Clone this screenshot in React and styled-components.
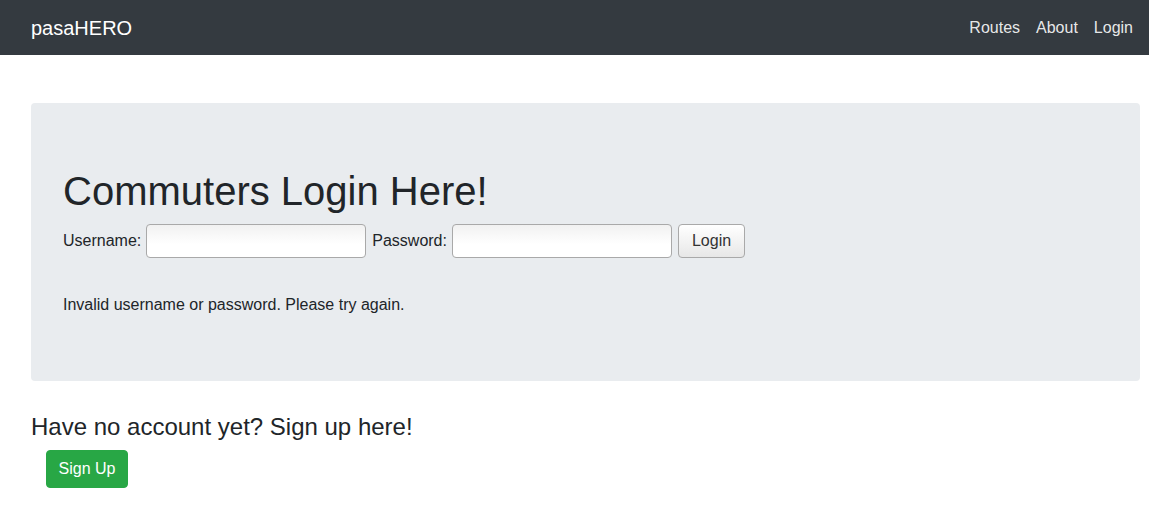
import React, { useState } from "react";
import styled, { createGlobalStyle } from "styled-components";

const GlobalStyle = createGlobalStyle`
  * { box-sizing: border-box; }
  body {
    margin: 0;
    font-family: "Liberation Sans", Arial, sans-serif;
    font-size: 16px;
    line-height: 1.5;
    color: #212529;
    background: #fff;
  }
`;

const Navbar = styled.nav`
  height: 55px;
  background-color: #343a40;
  display: flex;
  align-items: center;
  justify-content: space-between;
  padding: 0 16px 0 31px;
`;

const Brand = styled.a`
  color: #fff;
  font-size: 20px;
  line-height: 30px;
  text-decoration: none;
`;

const NavLinks = styled.div`
  display: flex;
  gap: 16px;
`;

const NavLink = styled.a`
  color: rgba(255, 255, 255, 0.9);
  font-size: 16px;
  text-decoration: none;
`;

const Main = styled.main`
  padding: 48px 9px 0 31px;
`;

const Jumbotron = styled.section`
  background-color: #e9ecef;
  border-radius: 4px;
  padding: 64px 32px;
  margin-bottom: 32px;
`;

const Title = styled.h1`
  font-size: 40px;
  font-weight: 400;
  line-height: 1.2;
  margin: 0 0 9px;
`;

const Form = styled.form`
  display: flex;
  align-items: center;
  gap: 6px;
`;

const Label = styled.label`
  font-size: 16px;
  display: flex;
  align-items: center;
  gap: 5px;
`;

const Input = styled.input`
  width: 220px;
  height: 34px;
  border: 1px solid #a9a9a9;
  border-radius: 4px;
  background: linear-gradient(#f1f1f1, #ffffff 60%);
  font-size: 16px;
  padding: 2px 6px;
  outline: none;
`;

const LoginButton = styled.button`
  height: 34px;
  padding: 0 13px;
  border: 1px solid #a9a9a9;
  border-radius: 4px;
  background: linear-gradient(#ffffff, #e7e7e7);
  color: #333;
  font-family: inherit;
  font-size: 16px;
`;

const Message = styled.p`
  margin: 35px 0 0;
  font-size: 16px;
  line-height: 24px;
`;

const SignupHeading = styled.h4`
  font-size: 24px;
  font-weight: 400;
  line-height: 1.2;
  margin: 0 0 8px;
`;

const SignupButton = styled.button`
  margin-left: 15px;
  width: 82px;
  height: 38px;
  padding: 0;
  border: 1px solid #28a745;
  border-radius: 4px;
  background-color: #28a745;
  color: #fff;
  font-family: inherit;
  font-size: 16px;
`;

const App = () => {
  const [username, setUsername] = useState("");
  const [password, setPassword] = useState("");

  return (
    <>
      <GlobalStyle />
      <Navbar>
        <Brand href="#">pasaHERO</Brand>
        <NavLinks>
          <NavLink href="#">Routes</NavLink>
          <NavLink href="#">About</NavLink>
          <NavLink href="#">Login</NavLink>
        </NavLinks>
      </Navbar>
      <Main>
        <Jumbotron>
          <Title>Commuters Login Here!</Title>
          <Form onSubmit={(e) => e.preventDefault()}>
            <Label>
              Username:
              <Input
                value={username}
                onChange={(e) => setUsername(e.target.value)}
              />
            </Label>
            <Label>
              Password:
              <Input
                type="password"
                value={password}
                onChange={(e) => setPassword(e.target.value)}
              />
            </Label>
            <LoginButton type="submit">Login</LoginButton>
          </Form>
          <Message>Invalid username or password. Please try again.</Message>
        </Jumbotron>
        <SignupHeading>Have no account yet? Sign up here!</SignupHeading>
        <SignupButton>Sign Up</SignupButton>
      </Main>
    </>
  );
};

export default App;
